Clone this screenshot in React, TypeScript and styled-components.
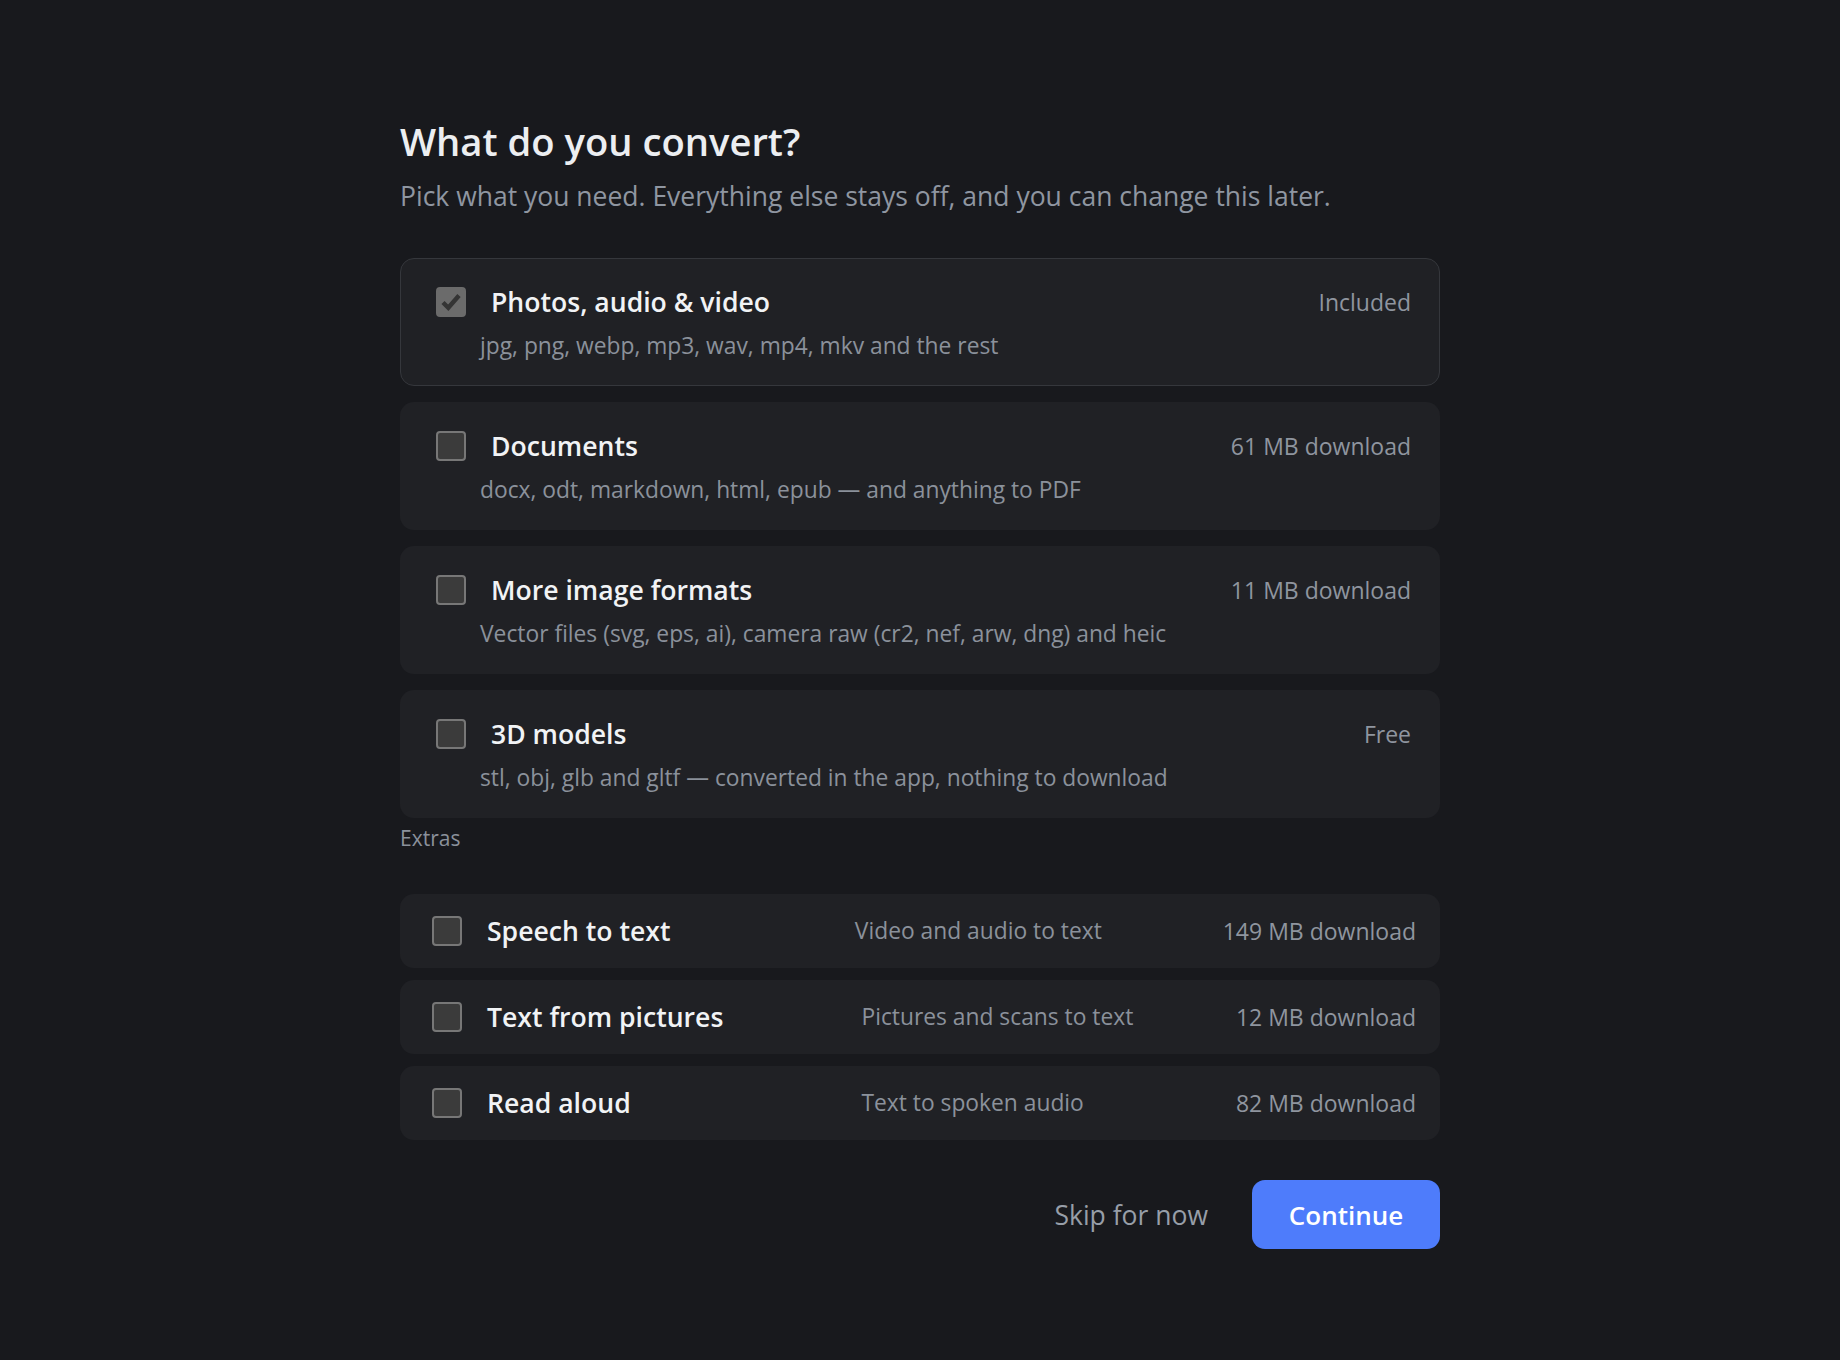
import React from "react";
import styled, { createGlobalStyle } from "styled-components";

const GlobalStyle = createGlobalStyle`
  html, body {
    margin: 0;
    padding: 0;
    background: #18191d;
  }
  body {
    font-family: "Open Sans", "Noto Sans", "Liberation Sans", sans-serif;
    color: #eceef1;
    -webkit-font-smoothing: antialiased;
  }
  * { box-sizing: border-box; }
`;

const Page = styled.main`
  min-height: 1360px;
  display: flex;
  justify-content: center;
  padding-top: 117px;
`;

const Column = styled.div`
  width: 1040px;
  display: flex;
  flex-direction: column;
`;

const Title = styled.h1`
  margin: 0;
  font-size: 38.2px;
  line-height: 48px;
  font-weight: 600;
  color: #eceef1;
`;

const Subtitle = styled.p`
  margin: 13px 0 0;
  font-size: 26.5px;
  line-height: 36px;
  font-weight: 400;
  color: #8f96a1;
`;

const CardList = styled.div`
  margin-top: 44px;
  display: flex;
  flex-direction: column;
  gap: 16px;
`;

const Card = styled.label<{ $locked?: boolean }>`
  display: flex;
  flex-direction: column;
  height: 128px;
  padding: 25px 28px 0 35px;
  border-radius: 14px;
  background: #202125;
  border: 1px solid ${(p) => (p.$locked ? "#35373c" : "transparent")};
  cursor: ${(p) => (p.$locked ? "default" : "pointer")};
`;

const CardHeader = styled.div`
  display: flex;
  align-items: center;
  height: 36px;
  gap: 25px;
`;

const CardTitle = styled.span`
  flex: 1;
  font-size: 26.6px;
  line-height: 36px;
  font-weight: 600;
  color: #f1f3f5;
`;

const SideNote = styled.span`
  font-size: 23px;
  line-height: 36px;
  color: #8f959f;
  white-space: nowrap;
`;

const CardDesc = styled.div`
  margin: 11px 0 0 44px;
  font-size: 22.8px;
  line-height: 30px;
  color: #8b919b;
`;

const Box = styled.span<{ $checked?: boolean }>`
  flex: none;
  width: 30px;
  height: 30px;
  border-radius: 4px;
  display: inline-flex;
  align-items: center;
  justify-content: center;
  background: ${(p) => (p.$checked ? "#6b6b6b" : "#3b3b3b")};
  border: 2px solid ${(p) => (p.$checked ? "#6b6b6b" : "#777777")};
`;

const SectionLabel = styled.div`
  margin: 6px 0 42px;
  font-size: 21px;
  line-height: 28px;
  color: #8b919b;
`;

const ExtraList = styled.div`
  display: flex;
  flex-direction: column;
  gap: 12px;
`;

const ExtraRow = styled.label`
  display: flex;
  align-items: center;
  height: 74px;
  padding: 0 24px 0 32px;
  gap: 25px;
  border-radius: 14px;
  background: #202125;
  cursor: pointer;
`;

const ExtraTitle = styled.span`
  flex: 1 1 0;
  font-size: 26.6px;
  line-height: 36px;
  font-weight: 600;
  color: #f1f3f5;
  white-space: nowrap;
`;

const ExtraDesc = styled.span`
  flex: 1 1 0;
  font-size: 22.8px;
  line-height: 36px;
  color: #8b919b;
  white-space: nowrap;
`;

const Footer = styled.div`
  margin-top: 40px;
  display: flex;
  justify-content: flex-end;
  align-items: center;
  gap: 24px;
`;

const GhostButton = styled.button`
  border: none;
  background: transparent;
  padding: 0 20px;
  height: 69px;
  font-family: inherit;
  font-size: 26.5px;
  color: #979ea8;
  cursor: pointer;
`;

const PrimaryButton = styled.button`
  border: none;
  width: 188px;
  height: 69px;
  border-radius: 13px;
  background: #4e7cfb;
  color: #ffffff;
  font-family: inherit;
  font-size: 26px;
  font-weight: 600;
  cursor: pointer;
`;

const Check = ({ checked }: { checked?: boolean }) => (
  <Box $checked={checked}>
    {checked && (
      <svg width="24" height="24" viewBox="0 0 24 24" aria-hidden="true">
        <path
          d="M4 12.5 L9.3 17.8 L20 5.5"
          fill="none"
          stroke="#343434"
          strokeWidth="4.4"
          strokeLinecap="butt"
          strokeLinejoin="miter"
        />
      </svg>
    )}
  </Box>
);

const mainOptions = [
  {
    title: "Photos, audio & video",
    desc: "jpg, png, webp, mp3, wav, mp4, mkv and the rest",
    note: "Included",
    locked: true,
  },
  {
    title: "Documents",
    desc: "docx, odt, markdown, html, epub — and anything to PDF",
    note: "61 MB download",
  },
  {
    title: "More image formats",
    desc: "Vector files (svg, eps, ai), camera raw (cr2, nef, arw, dng) and heic",
    note: "11 MB download",
  },
  {
    title: "3D models",
    desc: "stl, obj, glb and gltf — converted in the app, nothing to download",
    note: "Free",
  },
];

const extras = [
  { title: "Speech to text", desc: "Video and audio to text", note: "149 MB download" },
  { title: "Text from pictures", desc: "Pictures and scans to text", note: "12 MB download" },
  { title: "Read aloud", desc: "Text to spoken audio", note: "82 MB download" },
];

export default function App() {
  return (
    <>
      <GlobalStyle />
      <Page>
        <Column>
          <Title>What do you convert?</Title>
          <Subtitle>
            Pick what you need. Everything else stays off, and you can change this later.
          </Subtitle>
          <CardList>
            {mainOptions.map((o) => (
              <Card key={o.title} $locked={o.locked}>
                <CardHeader>
                  <Check checked={o.locked} />
                  <CardTitle>{o.title}</CardTitle>
                  <SideNote>{o.note}</SideNote>
                </CardHeader>
                <CardDesc>{o.desc}</CardDesc>
              </Card>
            ))}
          </CardList>
          <SectionLabel>Extras</SectionLabel>
          <ExtraList>
            {extras.map((e) => (
              <ExtraRow key={e.title}>
                <Check />
                <ExtraTitle>{e.title}</ExtraTitle>
                <ExtraDesc>{e.desc}</ExtraDesc>
                <SideNote>{e.note}</SideNote>
              </ExtraRow>
            ))}
          </ExtraList>
          <Footer>
            <GhostButton>Skip for now</GhostButton>
            <PrimaryButton>Continue</PrimaryButton>
          </Footer>
        </Column>
      </Page>
    </>
  );
}
